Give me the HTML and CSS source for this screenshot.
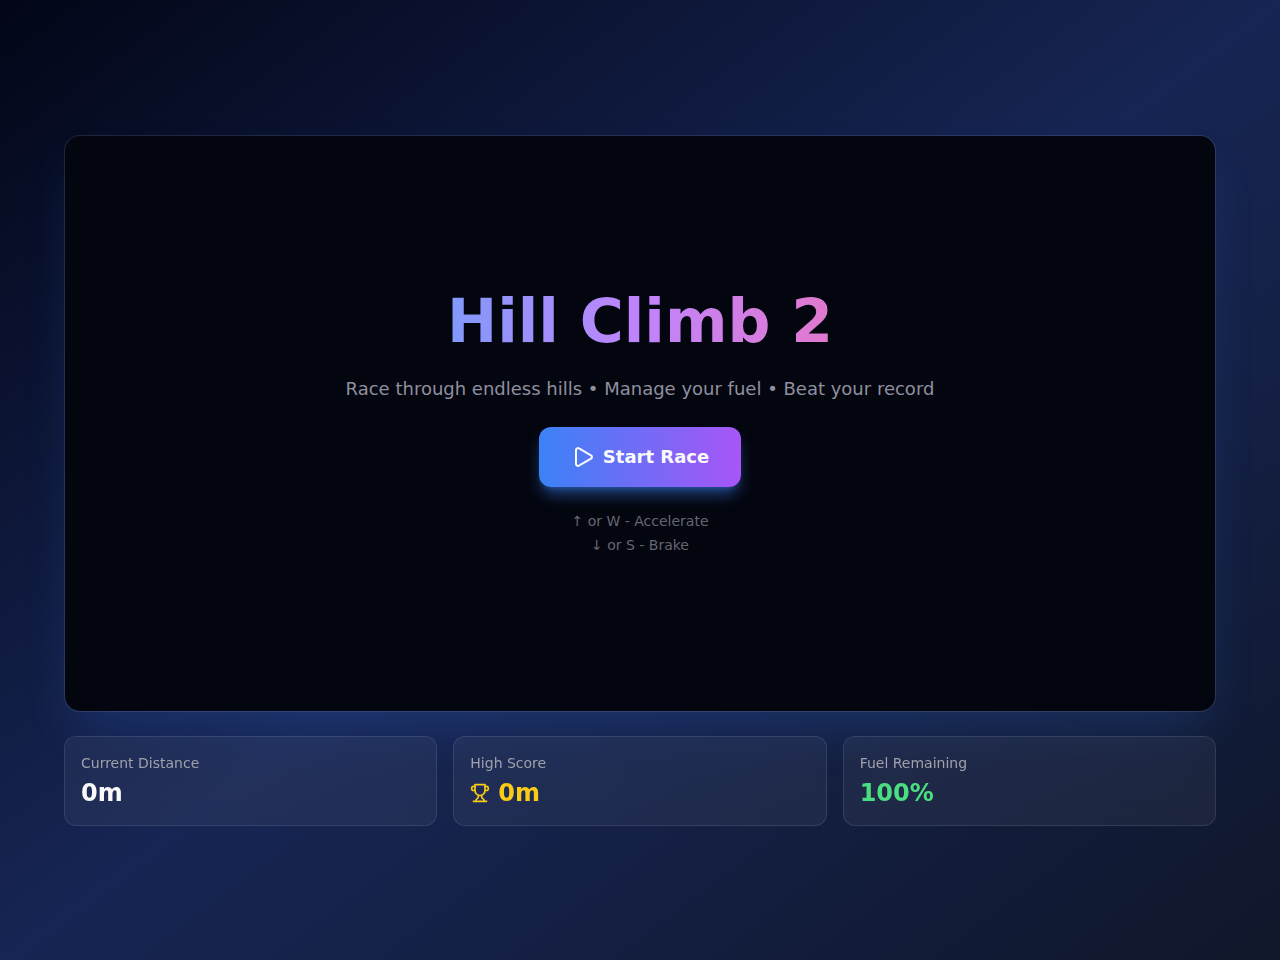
FILE: index.html
```html
<!DOCTYPE html>
<html lang="en">
<head>
  <meta charset="UTF-8" />
  <meta name="viewport" content="width=device-width, initial-scale=1.0" />
  <title>Hill Climb 2</title>
  <link rel="stylesheet" href="styles.css">
</head>
<body>
  <main class="container">
    <section class="game">
      <div class="menu">
        <h1>Hill Climb 2</h1>
        <p class="tagline">Race through endless hills • Manage your fuel • Beat your record</p>
        <button type="button" class="start">
          <svg width="24" height="24" viewBox="0 0 24 24" aria-hidden="true">
            <path d="M5 5a2 2 0 0 1 3.008-1.728l11.997 6.998a2 2 0 0 1 .003 3.458l-12 7A2 2 0 0 1 5 19z" />
          </svg>
          Start Race
        </button>
        <div class="hints">
          <p>↑ or W - Accelerate</p>
          <p>↓ or S - Brake</p>
        </div>
      </div>
    </section>

    <section class="stats">
      <div class="stat">
        <p class="label">Current Distance</p>
        <p class="value">0m</p>
      </div>
      <div class="stat">
        <p class="label">High Score</p>
        <p class="value score">
          <svg width="20" height="20" viewBox="0 0 24 24" aria-hidden="true">
            <path d="M6 9H4.5a2.5 2.5 0 0 1 0-5H6" />
            <path d="M18 9h1.5a2.5 2.5 0 0 0 0-5H18" />
            <path d="M4 22h16" />
            <path d="M10 14.66V17c0 .55-.47.98-.97 1.21C7.85 18.75 7 20.24 7 22" />
            <path d="M14 14.66V17c0 .55.47.98.97 1.21C16.15 18.75 17 20.24 17 22" />
            <path d="M18 2H6v7a6 6 0 0 0 12 0V2Z" />
          </svg>
          0m
        </p>
      </div>
      <div class="stat">
        <p class="label">Fuel Remaining</p>
        <p class="value fuel">100%</p>
      </div>
    </section>
  </main>
</body>
</html>
```

FILE: styles.css
```css
* {
  box-sizing: border-box;
  margin: 0;
}
body {
  min-height: 100vh;
  display: flex;
  align-items: center;
  justify-content: center;
  padding: 16px;
  font-family: "DejaVu Sans", sans-serif;
  color: #fafafa;
  background: linear-gradient(to bottom right, #020617, #172554, #0f172a);
}
.container {
  width: 100%;
  max-width: 1152px;
}

/* game screen with the start menu */
.game {
  aspect-ratio: 2 / 1;
  box-sizing: content-box;
  display: flex;
  align-items: center;
  justify-content: center;
  background: #04060f;
  background-clip: padding-box;
  border: 1px solid rgba(255, 255, 255, 0.1);
  border-radius: 16px;
  box-shadow: 0 25px 50px -12px rgba(59, 130, 246, 0.2);
}
.menu {
  display: flex;
  flex-direction: column;
  align-items: center;
  gap: 24px;
  text-align: center;
}
h1 {
  width: 100%;
  font-size: 60px;
  line-height: 60px;
  font-weight: bold;
  color: transparent;
  background: linear-gradient(to right, #60a5fa, #c084fc, #f472b6);
  -webkit-background-clip: text;
  background-clip: text;
}
.tagline {
  font-size: 18px;
  line-height: 28px;
  color: #8f8f9f;
}
.start {
  display: flex;
  align-items: center;
  gap: 8px;
  padding: 16px 32px;
  border: none;
  border-radius: 12px;
  font-family: inherit;
  font-size: 18px;
  line-height: 28px;
  font-weight: bold;
  color: #fafafa;
  background: linear-gradient(to right, #3b82f6, #a855f7);
  box-shadow: 0 10px 15px -3px rgba(59, 130, 246, 0.5), 0 4px 6px -4px rgba(59, 130, 246, 0.5);
  cursor: pointer;
}
svg {
  fill: none;
  stroke: currentColor;
  stroke-width: 2;
  stroke-linecap: round;
  stroke-linejoin: round;
}
.hints {
  display: grid;
  gap: 4px;
  font-size: 14px;
  line-height: 20px;
  color: #656573;
}

/* stats row */
.stats {
  display: grid;
  grid-template-columns: repeat(3, 1fr);
  gap: 16px;
  margin-top: 24px;
}
.stat {
  padding: 16px;
  background: rgba(255, 255, 255, 0.05);
  border: 1px solid rgba(255, 255, 255, 0.1);
  border-radius: 12px;
  backdrop-filter: blur(12px);
}
.label {
  margin-bottom: 4px;
  font-size: 14px;
  line-height: 20px;
  color: #a1a1aa;
}
.value {
  display: flex;
  align-items: center;
  gap: 8px;
  font-size: 24px;
  line-height: 32px;
  font-weight: bold;
}
.score {
  color: #facc15;
}
.fuel {
  color: #4ade80;
}

@media (max-width: 700px) {
  h1 {
    font-size: 40px;
  }
  .stats {
    grid-template-columns: 1fr;
  }
}
```
